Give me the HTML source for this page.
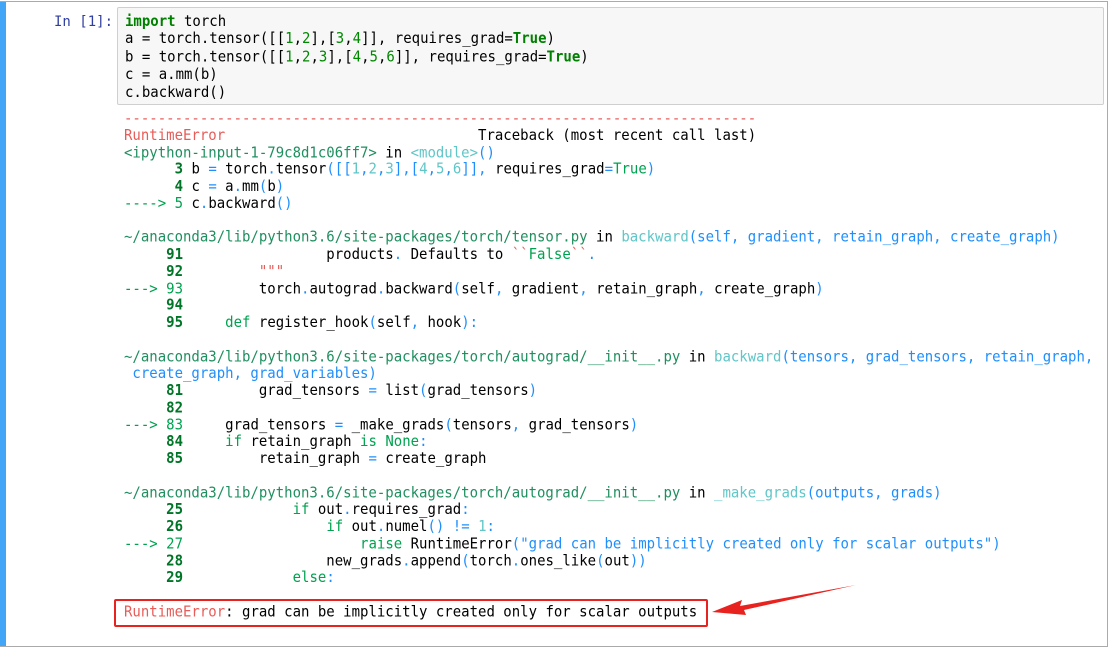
<!DOCTYPE html>
<html><head><meta charset="utf-8"><style>
body{margin:0;width:1111px;height:650px;background:#fff;position:relative;overflow:hidden;font-family:"DejaVu Sans Mono","Liberation Mono",monospace;}
.cell{position:absolute;left:0;top:1px;width:1107px;height:644px;border:1px solid #ababab;border-left:none;}
.bar{position:absolute;left:0;top:1px;width:6px;height:646px;background:#42a5f5;}
.prompt{position:absolute;left:54px;top:14px;font-size:14px;line-height:17px;color:#303f9f;}
.inbox{position:absolute;left:117px;top:7px;width:985px;height:96px;background:#f7f7f7;border:1px solid #cfcfcf;border-radius:2px;}
pre{margin:0;position:absolute;font-family:inherit;font-size:14px;line-height:17px;color:#000;transform:scaleY(1.08);transform-origin:0 0;}
.k{color:#008000;font-weight:bold}.n{color:#080}
.r{color:#e75c58}.g{color:#00a250}.p{color:#208f5f}.c{color:#60c6c8}.b{color:#208ffb}
.ln{color:#007427;font-weight:bold}.s{color:#208ffb}
.box{position:absolute;left:114px;top:599px;width:590px;height:24px;border:2.5px solid #e8231f;border-radius:2px;}
</style></head><body>
<div class="bar"></div><div class="cell"></div>
<div class="prompt">In&nbsp;[1]:</div>
<div class="inbox"></div>
<pre style="left:125px;top:13px;line-height:16.4px"><span class="k">import</span> torch
a = torch.tensor([[<span class="n">1</span>,<span class="n">2</span>],[<span class="n">3</span>,<span class="n">4</span>]], requires_grad=<span class="k">True</span>)
b = torch.tensor([[<span class="n">1</span>,<span class="n">2</span>,<span class="n">3</span>],[<span class="n">4</span>,<span class="n">5</span>,<span class="n">6</span>]], requires_grad=<span class="k">True</span>)
c = a.mm(b)
c.backward()</pre>
<pre style="left:124px;top:111px;line-height:15.75px"><span class="r">---------------------------------------------------------------------------</span>
<span class="r">RuntimeError</span>                              Traceback (most recent call last)
<span class="p">&lt;ipython-input-1-79c8d1c06ff7&gt;</span> in <span class="c">&lt;module&gt;</span><span class="b">()</span>
<span class="ln">      3</span> b <span class="b">=</span> torch<span class="b">.</span>tensor<span class="b">([[</span><span class="c">1</span><span class="b">,</span><span class="c">2</span><span class="b">,</span><span class="c">3</span><span class="b">],[</span><span class="c">4</span><span class="b">,</span><span class="c">5</span><span class="b">,</span><span class="c">6</span><span class="b">]],</span> requires_grad<span class="b">=</span><span class="g">True</span><span class="b">)</span>
<span class="ln">      4</span> c <span class="b">=</span> a<span class="b">.</span>mm<span class="b">(</span>b<span class="b">)</span>
<span class="g">----&gt; 5</span> c<span class="b">.</span>backward<span class="b">()</span>

<span class="p">~/anaconda3/lib/python3.6/site-packages/torch/tensor.py</span> in <span class="c">backward</span><span class="b">(self, gradient, retain_graph, create_graph)</span>
<span class="ln">     91</span>                 products<span class="b">.</span> Defaults to <span class="r">``</span><span class="g">False</span><span class="r">``</span><span class="b">.</span>
<span class="ln">     92</span>         <span class="r">"""</span>
<span class="g">---&gt; 93</span>         torch<span class="b">.</span>autograd<span class="b">.</span>backward<span class="b">(</span>self<span class="b">,</span> gradient<span class="b">,</span> retain_graph<span class="b">,</span> create_graph<span class="b">)</span>
<span class="ln">     94</span>
<span class="ln">     95</span>     <span class="g">def</span> register_hook<span class="b">(</span>self<span class="b">,</span> hook<span class="b">):</span>

<span class="p">~/anaconda3/lib/python3.6/site-packages/torch/autograd/__init__.py</span> in <span class="c">backward</span><span class="b">(tensors, grad_tensors, retain_graph,</span>
<span class="b"> create_graph, grad_variables)</span>
<span class="ln">     81</span>         grad_tensors <span class="b">=</span> list<span class="b">(</span>grad_tensors<span class="b">)</span>
<span class="ln">     82</span>
<span class="g">---&gt; 83</span>     grad_tensors <span class="b">=</span> _make_grads<span class="b">(</span>tensors<span class="b">,</span> grad_tensors<span class="b">)</span>
<span class="ln">     84</span>     <span class="g">if</span> retain_graph <span class="g">is</span> <span class="g">None</span><span class="b">:</span>
<span class="ln">     85</span>         retain_graph <span class="b">=</span> create_graph

<span class="p">~/anaconda3/lib/python3.6/site-packages/torch/autograd/__init__.py</span> in <span class="c">_make_grads</span><span class="b">(outputs, grads)</span>
<span class="ln">     25</span>             <span class="g">if</span> out<span class="b">.</span>requires_grad<span class="b">:</span>
<span class="ln">     26</span>                 <span class="g">if</span> out<span class="b">.</span>numel<span class="b">()</span> <span class="b">!=</span> <span class="c">1</span><span class="b">:</span>
<span class="g">---&gt; 27</span>                     <span class="g">raise</span> RuntimeError<span class="b">(</span><span class="s">"grad can be implicitly created only for scalar outputs"</span><span class="b">)</span>
<span class="ln">     28</span>                 new_grads<span class="b">.</span>append<span class="b">(</span>torch<span class="b">.</span>ones_like<span class="b">(</span>out<span class="b">))</span>
<span class="ln">     29</span>             <span class="g">else</span><span class="b">:</span>

<span class="r">RuntimeError</span>: grad can be implicitly created only for scalar outputs</pre>
<div class="box"></div>
<svg style="position:absolute;left:700px;top:580px" width="170" height="45"><path d="M156 5 L40 26 L42 20 L12 32 L46 35 L44 30 Z" fill="#e8231f"/></svg>
</body></html>
